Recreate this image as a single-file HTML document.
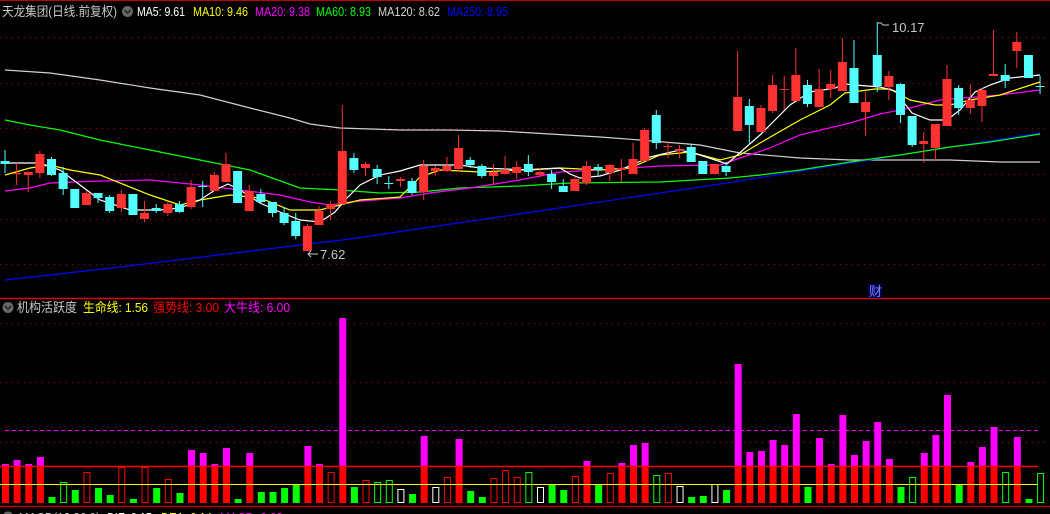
<!DOCTYPE html>
<html><head><meta charset="utf-8"><style>
html,body{margin:0;padding:0;background:#000;width:1050px;height:514px;overflow:hidden}
svg{display:block}
text{font-family:"Liberation Sans","Noto Sans CJK SC",sans-serif;font-size:13px}
</style></head><body>
<svg id="s" width="1050" height="514" xmlns="http://www.w3.org/2000/svg">
<rect width="1050" height="514" fill="#000"/>
<line x1="0" y1="0.5" x2="1050" y2="0.5" stroke="#c00000"/>
<g stroke="#a00000" stroke-dasharray="1 5">
<line x1="0" y1="37.5" x2="1050" y2="37.5"/><line x1="0" y1="83.5" x2="1050" y2="83.5"/>
<line x1="0" y1="128.5" x2="1050" y2="128.5"/><line x1="0" y1="174.5" x2="1050" y2="174.5"/>
<line x1="0" y1="219.5" x2="1050" y2="219.5"/><line x1="0" y1="264.5" x2="1050" y2="264.5"/>
<line x1="0" y1="323.5" x2="1050" y2="323.5"/><line x1="0" y1="382.5" x2="1050" y2="382.5"/>
<line x1="0" y1="442.5" x2="1050" y2="442.5"/>
</g>
<line x1="0" y1="298.5" x2="1050" y2="298.5" stroke="#e00000" stroke-width="1.5"/>
<line x1="0" y1="506.5" x2="1050" y2="506.5" stroke="#c00000" stroke-width="1.5"/>
<g id="ma" fill="none" stroke-width="1.2"></g>
<g id="cd"></g>
<g id="br"></g>
<line x1="5" y1="430.5" x2="1038" y2="430.5" stroke="#ff00ff" stroke-dasharray="4 3"/>
<line x1="0" y1="466.5" x2="1038" y2="466.5" stroke="#ff0000" stroke-width="1.5"/>
<line x1="0" y1="484.5" x2="1038" y2="484.5" stroke="#ffff00" stroke-width="1"/>
<!-- header -->
<text x="2" y="16" fill="#c8c8c8" textLength="115" lengthAdjust="spacingAndGlyphs">天龙集团(日线.前复权)</text>
<circle cx="127.5" cy="11.5" r="5.5" fill="#666"/><path d="M124.5 10l3 3 3-3" stroke="#222" stroke-width="1.5" fill="none"/>
<text x="137" y="16" fill="#fff" textLength="48" lengthAdjust="spacingAndGlyphs">MA5: 9.61</text>
<text x="193" y="16" fill="#ffff00" textLength="55" lengthAdjust="spacingAndGlyphs">MA10: 9.46</text>
<text x="255" y="16" fill="#ff00ff" textLength="55" lengthAdjust="spacingAndGlyphs">MA20: 9.38</text>
<text x="316" y="16" fill="#00ff00" textLength="55" lengthAdjust="spacingAndGlyphs">MA60: 8.93</text>
<text x="378" y="16" fill="#d0d0d0" textLength="62" lengthAdjust="spacingAndGlyphs">MA120: 8.62</text>
<text x="447" y="16" fill="#0000ff" textLength="61" lengthAdjust="spacingAndGlyphs">MA250: 8.95</text>
<circle cx="8" cy="307.5" r="5.5" fill="#666"/><path d="M5 306l3 3 3-3" stroke="#222" stroke-width="1.5" fill="none"/>
<text x="17" y="312" fill="#c8c8c8" textLength="60" lengthAdjust="spacingAndGlyphs">机构活跃度</text>
<text x="83" y="312" fill="#ffff00" textLength="65" lengthAdjust="spacingAndGlyphs">生命线: 1.56</text>
<text x="153" y="312" fill="#ff0000" textLength="66" lengthAdjust="spacingAndGlyphs">强势线: 3.00</text>
<text x="224" y="312" fill="#ff00ff" textLength="66" lengthAdjust="spacingAndGlyphs">大牛线: 6.00</text>
<circle cx="8" cy="517" r="5.5" fill="#666"/>
<text x="19" y="522" fill="#c8c8c8" textLength="81" lengthAdjust="spacingAndGlyphs">MACD(12,26,9)</text>
<text x="107" y="522" fill="#fff" textLength="45" lengthAdjust="spacingAndGlyphs">DIF: 0.15</text>
<text x="161" y="522" fill="#ffff00" textLength="51" lengthAdjust="spacingAndGlyphs">DEA: 0.14</text>
<text x="220" y="522" fill="#ff00ff" textLength="63" lengthAdjust="spacingAndGlyphs">MACD: 0.02</text>
<!-- labels -->
<path d="M318 254h-10m3-3l-3 3 3 3" stroke="#c8c8c8" fill="none"/>
<text x="320" y="259" fill="#c8c8c8" font-size="12">7.62</text>
<path d="M878 23h3l2 2h6" stroke="#c8c8c8" fill="none"/>
<text x="892" y="32" fill="#c8c8c8" font-size="12">10.17</text>
<rect x="868" y="284" width="14" height="14" fill="#000050"/>
<text x="869" y="296" fill="#8080ff" font-size="12">财</text>
</svg>
<script>
var NS="http://www.w3.org/2000/svg";
function el(p,t,a){var e=document.createElementNS(NS,t);for(var k in a)e.setAttribute(k,a[k]);p.appendChild(e);return e;}
var X=function(i){return 5+11.63*i;};
var ma=document.getElementById('ma');
var L={
"#d0d0d0":[[5,70],[50,73],[100,80],[150,88],[200,95],[250,108],[290,118],[310,124],[340,128],[400,130],[450,130],[500,131],[550,134],[600,137],[640,140],[700,145],[740,153],[800,158],[850,160],[950,160],[1000,162],[1040,162]],
"#0000ff":[[5,280],[103,269],[350,239],[553,209],[700,187],[720,184],[900,155],[1040,133]],
"#00ff00":[[5,120],[30,125],[60,130],[100,140],[150,150],[200,160],[250,170],[300,188],[340,190],[380,193],[420,192],[460,188],[520,186],[570,183],[660,182],[730,178],[760,175],[800,170],[850,162],[900,155],[950,147],[990,142],[1040,134]],
"#ff00ff":[[5,191],[30,188],[50,183],[100,181],[150,180],[200,185],[240,190],[280,195],[310,202],[330,205],[350,202],[400,198],[430,193],[470,188],[520,180],[560,172],[600,170],[660,166],[720,165],[740,158],[770,148],[800,135],[850,123],[880,114],[910,108],[940,100],[1000,95],[1040,90]],
"#ffff00":[[5,175],[30,168],[50,165],[70,170],[100,175],[150,195],[180,205],[200,200],[230,195],[260,198],[290,210],[320,210],[340,205],[360,200],[400,197],[420,177],[440,170],[480,172],[520,170],[560,168],[600,170],[630,168],[660,155],[690,152],[720,160],[740,155],[760,143],[800,120],[830,105],[845,93],[875,89],[890,89],[910,100],[935,105],[950,105],[970,100],[1000,95],[1040,82]],
"#ffffff":[[5,163],[40,163],[60,170],[80,185],[100,200],[130,210],[160,210],[180,208],[200,200],[215,190],[228,184],[240,190],[260,203],[280,212],[300,220],[320,222],[335,212],[345,200],[360,185],[380,175],[400,171],[420,165],[460,165],[480,168],[530,170],[560,168],[570,174],[580,178],[600,176],[620,170],[650,157],[680,150],[700,155],[727,164],[760,135],[790,105],[810,92],[835,88],[845,84],[855,85],[880,87],[895,91],[912,113],[930,120],[947,120],[960,110],[975,92],[990,85],[1010,78],[1040,75]]
};
for(var c in L){el(ma,'polyline',{points:L[c].map(function(p){return p.join(',')}).join(' '),stroke:c});}
var C=[[161,164,150,173,0],[173,173,163,185,1],[172,175,171,192,1],[154,173,151,178,1],[159,175,157,176,0],[173,189,167,195,0],[189,208,189,208,0],[193,205,191,205,1],[193,198,193,203,0],[197,211,195,213,0],
[194,208,190,212,1],[194,215,194,215,0],[213,219,201,222,1],[208,211,204,213,0],[204,213,202,216,1],[204,212,201,213,0],[187,207,180,209,1],[186,186,181,207,0],[175,191,172,191,1],[164,182,153,182,1],
[171,203,171,203,0],[191,211,185,211,1],[194,202,189,203,0],[202,213,202,217,0],[213,223,207,225,0],[221,236,213,239,0],[226,251,224,251,1],[211,225,206,225,1],[204,209,201,220,1],[151,204,105,205,1],
[158,170,153,173,0],[164,168,162,176,1],[169,177,165,184,0],[183,183,176,189,0],[179,181,177,187,1],[181,193,178,195,0],[166,192,160,200,1],[168,171,166,176,1],[166,171,157,172,1],[148,169,135,172,1],
[160,165,157,168,0],[166,176,164,178,0],[172,176,164,184,1],[170,174,156,174,1],[167,173,161,179,1],[164,172,155,176,0],[172,175,168,177,1],[174,182,170,189,0],[186,192,179,192,0],[179,191,177,191,1],
[166,183,161,185,1],[167,170,164,177,0],[165,173,164,181,1],[168,170,159,182,1],[159,174,143,174,1],[130,161,128,161,1],[115,143,110,149,0],[146,147,142,158,1],[149,151,145,158,1],[147,162,144,162,0],
[161,174,161,174,0],[164,174,164,174,1],[166,172,162,176,0],[97,131,51,131,1],[106,125,99,145,0],[108,132,105,132,1],[85,111,75,113,1],[89,89,76,110,1],[75,101,48,101,1],[85,104,80,107,0],
[89,107,69,107,1],[84,89,70,98,1],[62,91,38,91,1],[68,103,40,103,0],[102,112,92,136,1],[55,86,22,92,0],[76,87,71,100,1],[84,115,83,123,0],[116,145,116,147,0],[141,144,132,163,1],
[124,148,124,161,1],[79,126,65,126,1],[88,108,85,115,0],[100,108,84,114,1],[90,106,88,122,1],[74,76,30,76,1],[75,81,64,88,0],[42,51,32,68,1],[55,78,55,78,0],[86,86,76,94,0]];
var cd=document.getElementById('cd');
C.forEach(function(d,i){var x=X(i),col=d[4]?'#ff3232':'#54ffff';
 el(cd,'line',{x1:x,x2:x,y1:d[2],y2:d[3],stroke:col,'stroke-width':1});
 var h=Math.max(1,d[1]-d[0]);
 el(cd,'rect',{x:x-4.5,y:d[0],width:9,height:h,fill:col});});
var B=[[464,'m'],[460,'m'],[464,'m'],[457,'m'],[497,'g'],[482,'gh'],[490,'g'],[472,'rh'],[488,'g'],[495,'g'],
[467,'rh'],[499,'g'],[467,'rh'],[488,'g'],[479,'rh'],[493,'g'],[450,'m'],[453,'m'],[464,'m'],[448,'m'],
[499,'g'],[453,'m'],[492,'g'],[492,'g'],[488,'g'],[484,'g'],[446,'m'],[464,'m'],[472,'rh'],[318,'m'],
[487,'g'],[480,'rh'],[482,'gh'],[480,'gh'],[489,'wh'],[494,'g'],[436,'m'],[487,'wh'],[477,'rh'],[439,'m'],
[491,'g'],[497,'g'],[478,'rh'],[470,'rh'],[477,'rh'],[472,'gh'],[487,'wh'],[485,'g'],[490,'g'],[476,'rh'],
[461,'m'],[484,'g'],[473,'rh'],[463,'m'],[445,'m'],[443,'m'],[475,'gh'],[473,'rh'],[486,'wh'],[497,'g'],
[496,'g'],[484,'wh'],[490,'g'],[364,'m'],[452,'m'],[451,'m'],[440,'m'],[445,'m'],[414,'m'],[487,'g'],
[438,'m'],[464,'m'],[415,'m'],[455,'m'],[441,'m'],[422,'m'],[459,'m'],[487,'g'],[477,'gh'],[453,'m'],
[435,'m'],[395,'m'],[484,'g'],[462,'m'],[447,'m'],[427,'m'],[472,'gh'],[437,'m'],[499,'g'],[473,'gh']];
var br=document.getElementById('br'),BASE=503;
B.forEach(function(b,i){var x=X(i)-3,t=b[0],k=b[1];
 if(k=='m'){el(br,'rect',{x:x,y:466,width:7,height:BASE-466,fill:'#ff0000'});
  if(t<466)el(br,'rect',{x:x,y:t,width:7,height:466-t,fill:'#ff00ff'});}
 else if(k=='g'){el(br,'rect',{x:x,y:t,width:7,height:BASE-t,fill:'#00ff00'});}
 else{var col=k=='rh'?'#ff0000':k=='gh'?'#00ff00':'#ffffff';
  el(br,'rect',{x:x+0.5,y:t+0.5,width:6,height:BASE-t-1,fill:'none',stroke:col,'stroke-width':1});}});
</script>
</body></html>
